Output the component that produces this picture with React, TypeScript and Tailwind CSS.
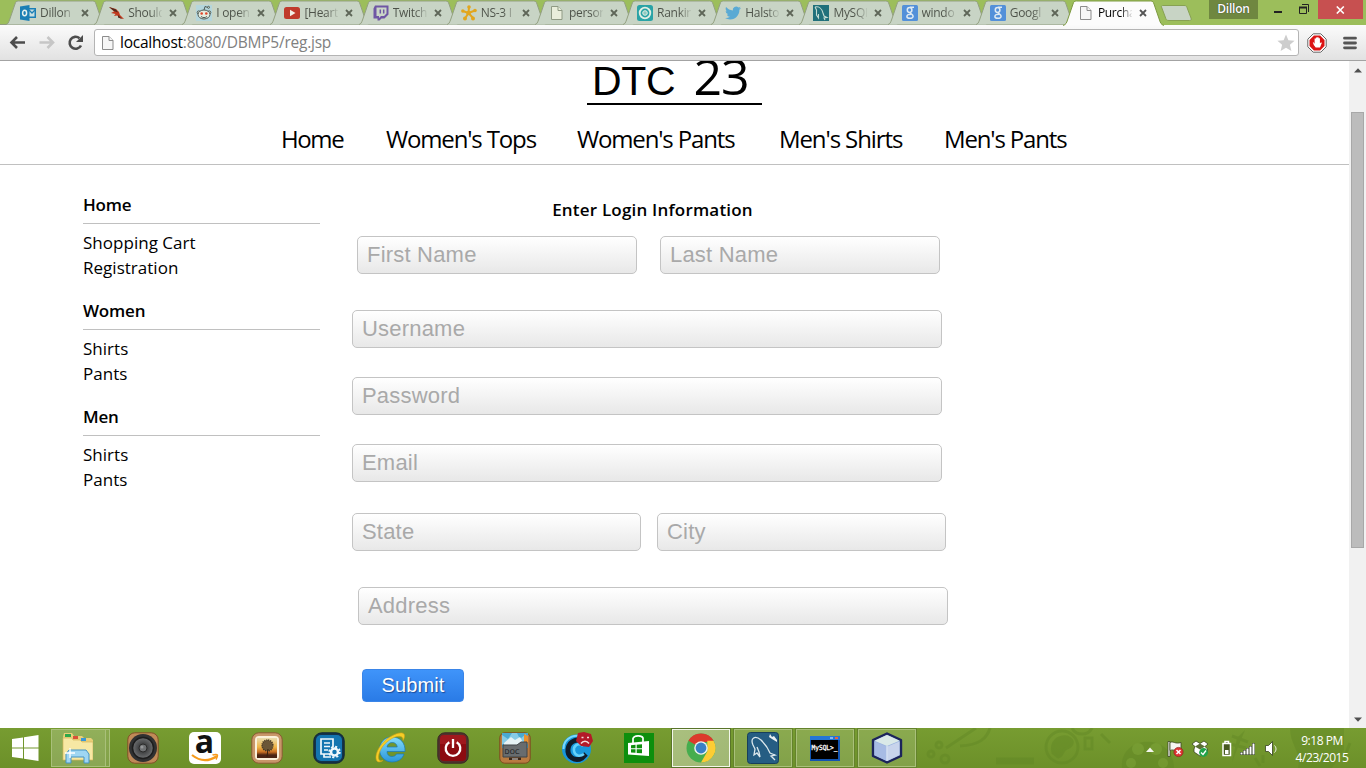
import React from 'react';

type Kids = { children?: React.ReactNode };

const Page = ({ active }: { active?: boolean }) => (
  <svg width="16" height="16" viewBox="0 0 16 16" fill={active ? '#f6f6f6' : '#e9eedb'} stroke={active ? '#8c8c8c' : '#8f9a84'}>
    <path d="M2.5 1.5h6.500l4 4v9h-10.500z" />
    <path d="M9 1.500v4h4" />
  </svg>
);

const GoogleG = () => (
  <svg width="16" height="16" viewBox="0 0 16 16">
    <rect width="16" height="16" rx="1.5" fill="#5390d9" />
    <g fill="none" stroke="#dfeaf2" strokeWidth="1.5">
      <ellipse cx="7.6" cy="5" rx="2.3" ry="2.4" />
      <path d="M8 2.300h4M8.500 7.500c-1 1 2.600 1.600 2.600 3.700c0 3-6.200 2.600-6.200.2c0-1.800 2-2.200 4.200-2.200" />
    </g>
  </svg>
);

const Outlook = () => (
  <svg width="16" height="16" viewBox="0 0 16 16">
    <path d="M8 3h8v10H8z" fill="#1b7fb5" />
    <path d="M9 4.500h5.500v7H9z" fill="#c9dfe0" />
    <path d="M9 5l3 3 3-3" fill="none" stroke="#1b7fb5" strokeWidth="1.300" />
    <path d="M0 1.500L9.500 0v16L0 14.500z" fill="#1b7fb5" />
    <ellipse cx="4.600" cy="8" rx="2" ry="2.700" fill="none" stroke="#e6f1ee" strokeWidth="1.500" />
  </svg>
);

const RedBird = () => (
  <svg width="16" height="16" viewBox="0 0 16 16">
    <path d="M1 2l7 2 3 3 1 3 4 4-3-.5-4-3-3 .5 1.500-2L3 8l3-1.500z" fill="#c0391d" />
    <path d="M1 2l7 2.500 2 3-4-1.500zM10 10l4 4-4-1.500z" fill="#4b2a20" />
  </svg>
);

const Reddit = () => (
  <svg width="16" height="16" viewBox="0 0 16 16">
    <rect width="16" height="16" fill="#b5d6dc" />
    <g fill="#e4ecdf" stroke="#4c5a55" strokeWidth="1">
      <circle cx="2.800" cy="7.500" r="1.600" />
      <circle cx="13.200" cy="7.500" r="1.600" />
      <path d="M8 5l1-3.500 3 1" fill="none" />
      <circle cx="12.500" cy="2.300" r="1" />
      <ellipse cx="8" cy="9.500" rx="6" ry="4.500" />
      <path d="M5 11.500c2 1.500 4 1.500 6 0" fill="none" />
    </g>
    <circle cx="5.700" cy="8.500" r="1.300" fill="#e0452a" />
    <circle cx="10.300" cy="8.500" r="1.300" fill="#e0452a" />
  </svg>
);

const YouTube = () => (
  <svg width="16" height="16" viewBox="0 0 16 16">
    <rect y="2" width="16" height="12" rx="2.500" fill="#c03a2b" />
    <path d="M6 4.800v6.400L11.500 8z" fill="#f3efe6" />
  </svg>
);

const Twitch = () => (
  <svg width="16" height="16" viewBox="0 0 16 16">
    <path d="M2 .5h13.500v9L11.500 13.500H8.500L6.500 15.500H4.500v-2H.5V3.500z" fill="#6f56a4" />
    <path d="M3.500 2.500h10v6l-2.500 2.500H8l-2 2v-2H3.500z" fill="#cbd6c8" />
    <path d="M7.300 4.500v4M10.700 4.500v4" stroke="#6f56a4" strokeWidth="1.500" />
  </svg>
);

const Ns3 = () => (
  <svg width="16" height="16" viewBox="0 0 16 16" fill="#e2a61e" stroke="#e2a61e" strokeWidth="2">
    <path d="M7.500 8L8 2M7.500 8L1.800 6M7.500 8L4 13.500M7.500 8l5 5.500M7.500 8L14 5.500" />
    <g stroke="none">
      <circle cx="8" cy="2" r="1.800" /><circle cx="1.800" cy="6" r="1.700" /><circle cx="4" cy="13.500" r="2" />
      <circle cx="12" cy="13.500" r="2" /><circle cx="14" cy="5.500" r="1.800" /><circle cx="7.500" cy="8" r="2.300" />
    </g>
  </svg>
);

const Ranking = () => (
  <svg width="16" height="16" viewBox="0 0 16 16">
    <rect width="16" height="16" rx="2.500" fill="#2aa3a6" />
    <circle cx="8" cy="8" r="5.300" fill="none" stroke="#e2efe4" strokeWidth="1.800" />
    <circle cx="8" cy="8" r="2.300" fill="#8dcac1" stroke="#e2efe4" />
  </svg>
);

const Twitter = () => (
  <svg width="16" height="16" viewBox="0 0 24 24" fill="#5aaad4">
    <path d="M23.950 4.570a10 10 0 01-2.820.780 4.960 4.960 0 002.160-2.720c-.950.560-2 .950-3.130 1.180a4.920 4.920 0 00-8.380 4.480C7.690 8.100 4.070 6.130 1.640 3.160a4.820 4.820 0 00-.660 2.480c0 1.710.870 3.210 2.190 4.100a4.900 4.900 0 01-2.230-.620v.060a4.920 4.920 0 003.950 4.830 5 5 0 01-2.210.080 4.940 4.940 0 004.600 3.420A9.870 9.870 0 010 19.540a14 14 0 007.550 2.210c9.050 0 14-7.500 14-13.980 0-.210 0-.420-.020-.630a9.940 9.940 0 002.460-2.550z" />
  </svg>
);

const MySqlFav = () => (
  <svg width="16" height="16" viewBox="0 0 16 16">
    <rect width="16" height="16" fill="#20707b" />
    <path d="M2 2c4-1 7 2 8 6l1 3 3 1.500-3 .5 1 2M2 2l1.500 3v5l2 3v-4" fill="none" stroke="#c4dcd4" strokeWidth="1.100" />
  </svg>
);

const tabs: { t: string; icon: React.ReactNode }[] = [
  { t: 'Dillon', icon: <Outlook /> },
  { t: 'Should', icon: <RedBird /> },
  { t: 'I open', icon: <Reddit /> },
  { t: '[Heart', icon: <YouTube /> },
  { t: 'Twitch', icon: <Twitch /> },
  { t: 'NS-3 I', icon: <Ns3 /> },
  { t: 'person', icon: <Page /> },
  { t: 'Rankin', icon: <Ranking /> },
  { t: 'Halsto', icon: <Twitter /> },
  { t: 'MySQL', icon: <MySqlFav /> },
  { t: 'windo', icon: <GoogleG /> },
  { t: 'Googl', icon: <GoogleG /> },
  { t: 'Purcha', icon: <Page active /> },
];

const Tab = ({ t, icon, active }: { t: string; icon: React.ReactNode; active?: boolean }) => (
  <div className={active ? 'relative z-10 flex h-[25px] w-[88.170px] shrink-0 items-center pl-[16px]' : 'relative flex h-[25px] w-[88.170px] shrink-0 items-center pl-[16px]'}>
    <svg className="absolute left-0 top-0" width="104" height="26" viewBox="0 0 104 26">
      <path
        d={active ? 'M1 25.500C4 24.500 4.500 23 5.500 20L11 4C11.700 1.800 12.300 1 14.500 1H88.500C90.700 1 91.300 1.800 92 4L97.500 20C98.500 23 99 24.500 102 25.500' : 'M2 24.500C4 24 4.500 22.500 5.500 20L11 4C11.700 1.800 12.300 1 14.500 1H88.500C90.700 1 91.300 1.800 92 4L97.500 20C98.500 22.500 99 24 101 24.500'}
        fill={active ? '#fcfcfc' : '#c8d4c5'}
        stroke={active ? '#7c9940' : '#93a081'}
        strokeWidth="1"
      />
    </svg>
    <span className="relative flex h-4 w-4">{icon}</span>
    <span
      className={active ? 'relative ml-[4px] w-[34px] overflow-hidden whitespace-nowrap bg-linear-to-r from-black from-65% to-black/10 bg-clip-text text-[12px] tracking-[-0.300px] text-transparent' : 'relative ml-[4px] w-[34px] overflow-hidden whitespace-nowrap bg-linear-to-r from-[#4c5148] from-65% to-[#4c5148]/10 bg-clip-text text-[12px] tracking-[-0.300px] text-transparent'}
    >
      {t}
    </span>
    <svg className="relative ml-[7px]" width="8" height="8" viewBox="0 0 8 8">
      <path d="M1 1l6 6M7 1L1 7" stroke={active ? '#555' : '#5e6658'} strokeWidth="1.800" />
    </svg>
  </div>
);

const Chrome = () => (
  <div className="h-[61px] shrink-0 bg-[#9cbe5b]">
    <div className="flex h-[25px]">
      <div className="flex w-[1159px] shrink-0 pl-[4px] shadow-[inset_0_-1px_0_#8f9b7c]">
        {tabs.map((x, i) => <Tab key={i} t={x.t} icon={x.icon} active={i === 12} />)}
      </div>
      <svg className="mt-[5px] shrink-0" width="34" height="16" viewBox="0 0 34 16">
        <path d="M2.500 2C2 .8 3 .5 4 .5H25c2 0 2.500.5 3 2l4 10.500c.8 2-.2 2.500-1.500 2.500H10c-2 0-2.600-.5-3.200-2z" fill="#c8d4c5" stroke="#87a153" />
      </svg>
      <div className="ml-[16px] flex h-[19px] w-[49px] shrink-0 items-center justify-center bg-[#6f8740] pb-px text-[12px] font-semibold tracking-[-0.200px] text-white [text-shadow:0_0_1px_#222]">Dillon</div>
      <svg className="ml-[16px] mt-[4px] shrink-0" width="38" height="12" viewBox="0 0 38 12" fill="none" stroke="#222">
        <path d="M0 8h8" strokeWidth="2" />
        <path d="M25.500 3.500h7v6h-7z" />
        <path d="M25 3.500h8" strokeWidth="2" />
        <path d="M28 .5h6.500V8" />
      </svg>
      <div className="ml-[6px] flex h-[19px] w-[45px] shrink-0 items-center justify-center bg-[#c75050]">
        <svg width="9" height="8" viewBox="0 0 9 8"><path d="M.8.500l7 7M7.800.500l-7 7" stroke="#fff" strokeWidth="1.600" /></svg>
      </div>
    </div>
    <div className="flex h-[36px] items-center border-b border-[#a3a3a3] bg-linear-to-b from-[#fbfbfb] to-[#e2e2e2] pl-[9px]">
      <svg width="80" height="18" viewBox="0 0 80 18" fill="none" strokeWidth="2.600">
        <path d="M2 8.500H16M8 3L2.500 8.500 8 14" stroke="#4d4d4d" />
        <path d="M30.500 8.500H44M38.500 3l5.500 5.500-5.500 5.500" stroke="#c6c6c6" />
        <path d="M72 11.500A6 6 0 1 1 70.500 4.200" stroke="#4d4d4d" />
        <path d="M74 1v7h-7z" fill="#4d4d4d" />
      </svg>
      <div className="ml-[5px] flex h-[27px] w-[1205px] shrink-0 items-center rounded-[3px] border border-[#b4b4b4] bg-white pl-[5px]">
        <Page active />
        <span className="ml-[4px] whitespace-nowrap text-[15.500px] tracking-[-0.230px] text-[#808080]"><span className="text-black">localhost</span>:8080/DBMP5/reg.jsp</span>
        <svg className="ml-auto mr-[3px]" width="18" height="18" viewBox="0 0 18 18"><path d="M9 .5l2.400 5.800 6.200.5-4.700 4 1.500 6.200L9 13.700 3.600 17l1.500-6.200-4.700-4 6.200-.5z" fill="#cdcdcd" /></svg>
      </div>
      <svg className="ml-[8px]" width="20" height="20" viewBox="0 0 20 20">
        <path d="M6.200.8h7.600l5.400 5.400v7.600l-5.400 5.400H6.200L.8 13.800V6.200z" fill="#fff" stroke="#666" />
        <path d="M6.900 2.500h6.200l4.400 4.400v6.200l-4.400 4.400H6.900l-4.400-4.400V6.900z" fill="#dc1414" />
        <path d="M5.800 9.300l1 .2.800 1.200V5.500h1.300V4.500h1.400v-.3h1.300v1h1.300v5l1.300-1 .6.8-1.800 4.500H8.700L6.800 12z" fill="#fff" />
      </svg>
      <svg className="ml-[16px]" width="14" height="14" viewBox="0 0 14 14"><path d="M1.500 2.200h11M1.500 7h11M1.500 11.800h11" stroke="#555" strokeWidth="2.800" strokeLinecap="round" /></svg>
    </div>
  </div>
);

const Field = ({ w, children }: Kids & { w: string }) => (
  <div className={`${w} flex h-[38px] shrink-0 items-center rounded-[5px] border border-[#c4c4c4] bg-linear-to-b from-white to-[#e8e8e8] pb-px pl-[9px] font-['Liberation_Sans',sans-serif] text-[22px] tracking-[0.200px] text-[#a9a9a9]`}>
    {children}
  </div>
);

const Group = ({ title, items }: { title: string; items: string[] }) => (
  <section className="h-[106px] w-[237px]">
    <h3 className="flex h-[32px] items-start border-b border-[#c0c0c0] text-[17px] font-semibold leading-[26px] tracking-[-0.200px]">{title}</h3>
    <ul className="pt-[6px] text-[17px] leading-[25px] tracking-[0.020px]">{items.map((i) => <li key={i}>{i}</li>)}</ul>
  </section>
);

const Site = () => (
  <div className="min-w-0 flex-1 overflow-hidden bg-white text-black">
    <header className="h-[104px] border-b border-[#c0c0c0]">
      <div className="ml-[587px] flex h-[44px] w-[175px] items-end border-b-2 border-black pl-[5px]">
        <span className="font-['Liberation_Sans',sans-serif] text-[41px] leading-[43px] tracking-[-0.300px]">DTC</span>
        <span className="ml-[18px] text-[50px] font-medium leading-[54px] tracking-[-1px]">23</span>
      </div>
      <nav className="flex pl-[281px] pt-[16px] text-[24px] leading-[36px]">
        <span className="w-[105px] shrink-0 tracking-[-1.400px]">Home</span>
        <span className="w-[191px] shrink-0 tracking-[-1.150px]">Women's Tops</span>
        <span className="w-[202px] shrink-0 tracking-[-1.150px]">Women's Pants</span>
        <span className="w-[165px] shrink-0 tracking-[-1.100px]">Men's Shirts</span>
        <span className="tracking-[-1.150px]">Men's Pants</span>
      </nav>
    </header>
    <div className="flex">
      <aside className="w-[352px] shrink-0 pl-[83px] pt-[27px]">
        <Group title="Home" items={['Shopping Cart', 'Registration']} />
        <Group title="Women" items={['Shirts', 'Pants']} />
        <Group title="Men" items={['Shirts', 'Pants']} />
      </aside>
      <form className="flex w-[600px] flex-col">
        <h2 className="mt-[32px] w-[601px] text-center text-[17px] font-semibold leading-[26px] tracking-[0.200px]">Enter Login Information</h2>
        <div className="ml-[5px] mt-[13px] flex gap-[23px]"><Field w="w-[280px]">First Name</Field><Field w="w-[280px]">Last Name</Field></div>
        <div className="mt-[36px] flex flex-col gap-[29px]">
          <Field w="w-[590px]">Username</Field>
          <Field w="w-[590px]">Password</Field>
          <Field w="w-[590px]">Email</Field>
        </div>
        <div className="mt-[31px] flex gap-[16px]"><Field w="w-[289px]">State</Field><Field w="w-[289px]">City</Field></div>
        <div className="ml-[6px] mt-[36px] flex"><Field w="w-[590px]">Address</Field></div>
        <button type="button" className="ml-[10px] mt-[44px] h-[33px] w-[102px] rounded-[4px] border border-[#3a85e8] bg-linear-to-b from-[#3f94fa] to-[#2a7be6] pb-[2px] font-['Liberation_Sans',sans-serif] text-[20px] leading-[28px] tracking-[0.100px] text-white [text-shadow:1px_1px_1px_#1c4c98]">Submit</button>
      </form>
    </div>
  </div>
);

const Scrollbar = () => (
  <div className="flex w-[17px] shrink-0 flex-col items-center bg-[#f1f1f1]">
    <svg className="mt-[7px] shrink-0" width="8" height="5" viewBox="0 0 8 5"><path d="M0 4.500L4 .3l4 4.200z" fill="#505050" /></svg>
    <div className="mt-[39px] h-[436px] w-[13px] shrink-0 border border-[#a8a8a8] bg-[#bcbcbc]" />
    <svg className="mb-[6px] mt-auto shrink-0" width="8" height="5" viewBox="0 0 8 5"><path d="M0 .5l4 4.200L8 .5z" fill="#505050" /></svg>
  </div>
);

const Big = ({ children }: Kids) => <svg width="32" height="32" viewBox="0 0 32 32">{children}</svg>;

const Explorer = () => (
  <svg className="-ml-[3px]" width="32" height="32" viewBox="0 0 32 32">
    <path d="M2 5l1-4h8l2 3h8l2 2h7l2 2v20H2z" fill="#e9cf78" />
    <path d="M4 2h6v3H4z" fill="#2ea84a" /><path d="M12 4h5v3h-5z" fill="#d95038" /><path d="M20 6h5v3h-5z" fill="#3a97d6" />
    <path d="M2 6h9l1 2h7l2 2h11v18H2z" fill="#f7e8a4" stroke="#d4b65c" strokeWidth=".7" />
    <path d="M5 31v-9l3-4h17l3 4v9h-5v-6H10v6z" fill="#9fd6f2" stroke="#4593c2" />
    <path d="M9 16v10M4 21h10" stroke="#fff" strokeWidth="1.300" />
  </svg>
);

const Speaker = () => (
  <Big>
    <defs><radialGradient id="cone"><stop offset=".3" stopColor="#3a3b3c" /><stop offset="1" stopColor="#6d6f71" /></radialGradient></defs>
    <rect x=".8" y=".8" width="30.400" height="30.400" rx="7" fill="#c08a58" stroke="#805027" />
    <circle cx="16" cy="16" r="14" fill="#303132" />
    <circle cx="16" cy="16" r="10.500" fill="url(#cone)" stroke="#1d1d1d" strokeWidth="1.500" />
    <circle cx="16" cy="16" r="4" fill="#707274" stroke="#2b2b2b" />
    <circle cx="15" cy="15" r="1.500" fill="#96989a" />
  </Big>
);

const Amazon = () => (
  <Big>
    <rect width="32" height="32" rx="5" fill="#fff" />
    <text x="15.500" y="21" textAnchor="middle" fontFamily="Open Sans" fontWeight="700" fontSize="32" fill="#111">a</text>
    <path d="M3 23c8 6.500 17 6.500 25 1" fill="none" stroke="#f79b1c" strokeWidth="2.200" />
    <path d="M23.500 23c3-1 5-.5 5 0s-.3 2.500-1.500 4.500" fill="none" stroke="#f79b1c" strokeWidth="1.500" />
  </Big>
);

const Photo = () => (
  <Big>
    <defs><linearGradient id="sky" x2="0" y2="1"><stop stopColor="#e9dcae" /><stop offset=".45" stopColor="#efb548" /><stop offset=".7" stopColor="#c96f22" /><stop offset=".85" stopColor="#4a2413" /></linearGradient></defs>
    <rect x=".8" y=".8" width="30.400" height="30.400" rx="7" fill="#c8966a" stroke="#875a31" />
    <rect x="4" y="4" width="24" height="24" rx="4" fill="#fbf0d9" />
    <rect x="6" y="6" width="20" height="20" fill="url(#sky)" />
    <circle cx="16.500" cy="13.500" r="5.500" fill="#6b5637" stroke="#423524" strokeDasharray="1 1" strokeWidth="1.500" />
    <path d="M17 17l-1 8" stroke="#35200f" />
  </Big>
);

const Settings = () => (
  <Big>
    <rect x=".8" y=".8" width="30.400" height="30.400" rx="8" fill="#15334a" stroke="#102536" />
    <rect x="3" y="3" width="26" height="26" rx="5" fill="#1475b0" />
    <g fill="none" stroke="#f1f8fc" strokeWidth="1.700">
      <path d="M17 22H8V7h12v8M11 22v3h7" />
      <path d="M11 11h6M11 14.500h6M11 18h4" strokeWidth="1.300" />
      <circle cx="21.500" cy="20" r="3.500" strokeWidth="2.500" />
      <circle cx="21.500" cy="20" r="5.300" strokeDasharray="2.100 2.060" strokeWidth="1.800" />
    </g>
  </Big>
);

const IE = () => (
  <Big>
    <defs><linearGradient id="ie" x2="0" y2="1"><stop stopColor="#83dcfa" /><stop offset="1" stopColor="#2a96da" /></linearGradient></defs>
    <path d="M17 5C9 5 4.500 11 4.500 17.500S9.500 30 17 30c6 0 10.500-3 12-8h-7.500c-1 1.800-2.500 2.500-4.500 2.500-3 0-5-2-5-5H30C30.500 10.500 25 5 17 5zm-5 10c.5-2.800 2.500-4.500 5.200-4.500s4.800 1.700 5 4.500z" fill="url(#ie)" stroke="#1879b8" strokeWidth=".7" />
    <path d="M8 28.500C1 33-1 26 3 18 9 5 26-2 29 2c1 1.500.5 4-1 6.500C29-.5 11 6 5 19c-3 7-1.500 11 3 9.500z" fill="#f6ce27" stroke="#d7a313" strokeWidth=".6" />
  </Big>
);

const Power = () => (
  <Big>
    <rect x=".8" y=".8" width="30.400" height="30.400" rx="7" fill="#53302d" stroke="#3a2c24" />
    <rect x="3" y="3" width="26" height="26" rx="4" fill="#8c0b10" />
    <path d="M3 12V7a4 4 0 0 1 4-4h18a4 4 0 0 1 4 4v5z" fill="#b3252a" opacity=".5" />
    <path d="M12.300 10.200a7.300 7.300 0 1 0 7.400 0M16 7v9" fill="none" stroke="#fff" strokeWidth="2.300" />
  </Big>
);

const Doc = () => (
  <Big>
    <rect x=".8" y=".8" width="30.400" height="30.400" rx="5" fill="#b97b40" stroke="#7c4c20" />
    <path d="M3 1h26v15H3z" fill="#4aa9d2" />
    <path d="M3 3l6 4 4-6h5l3 6 6-5v10H3z" fill="#86cbe6" />
    <path d="M5 11l7-6 4 3 5-3 4 7v2H5z" fill="#e6f2f4" /><path d="M25 2l4 2v8l-4-2z" fill="#ea9230" />
    <path d="M4 13h14l4-3h6v15H4z" fill="#686c6e" stroke="#404446" />
    <text x="5.500" y="22" fontFamily="DejaVu Sans" fontSize="6.500" textLength="15" fill="#1b1d1f">DOC</text>
    <path d="M10 25.500h12v2.500H10z" fill="#3b281a" /><path d="M13 27h6" stroke="#ddd" />
  </Big>
);

const Comodo = () => (
  <Big>
    <circle cx="15.500" cy="17" r="14.500" fill="#1897dc" />
    <path d="M2.500 17a13 13 0 0 1 22-9.500" fill="none" stroke="#7ad8fb" strokeWidth="2" />
    <path d="M24 11C17 5 8 9 7 17s7 13 14 9l4-4" fill="none" stroke="#101c2a" strokeWidth="5" />
    <path d="M22 14c-5-4-10 0-9 5s6 6 10 3" fill="none" stroke="#65d1fa" strokeWidth="2.500" />
    <path d="M17 1l6-1 7 2 2 7-4 6-8-1-5-5z" fill="#b41928" />
    <path d="M20 11.500c2-3 6-3 8 0M20.500 5.500h2M26 5.500h2" fill="none" stroke="#f2dcdc" strokeWidth="1.500" />
  </Big>
);

const Store = () => (
  <Big>
    <path d="M1 1h30v30H1z" fill="#0d8f0d" />
    <path d="M5 11l21-2v15l-21-1.500z" fill="#fff" />
    <path d="M10 11V6.500C11 3 19 3 20 6v5" fill="none" stroke="#fff" strokeWidth="1.700" />
    <path d="M8 13.200l4.500-.4v3.500H8zM13.700 12.700l5.300-.4v4h-5.300zM8 17.300h4.500v3.500L8 20.500zM13.700 17.300H19v4l-5.300-.4z" fill="#0d8f0d" />
  </Big>
);

const ChromeIcon = () => (
  <Big>
    <circle cx="16" cy="16" r="14.500" fill="#46ad4e" />
    <path d="M16 16L3.440 8.750A14.500 14.500 0 0 1 28.560 8.750L28 10H16z" fill="#dc3a2c" />
    <path d="M28.560 8.750A14.500 14.500 0 0 1 16 30.500l6.300-11V8.750z" fill="#fccd34" />
    <circle cx="16" cy="16" r="6.800" fill="#edf2ec" /><circle cx="16" cy="16" r="5.400" fill="#3980c5" />
  </Big>
);

const Workbench = () => (
  <Big>
    <rect x=".5" y=".5" width="31" height="31" rx="3" fill="#255d83" stroke="#173f5b" />
    <path d="M6 13C3 6 8 3 14 8c5 5 7 8 9 13l5 2-4 1 4 4M6 13l2 4-1 6 3-2 3 4-1-5-2-5" fill="none" stroke="#dce8ed" strokeWidth="1.300" />
    <path d="M23 2l2 3 2-1 3 4v2l-5-3-3-2z" fill="#eef2f2" />
  </Big>
);

const Terminal = () => (
  <Big>
    <path d="M1 4h30v25H1z" fill="#1254b0" /><path d="M1 4h30v4H1z" fill="#2576d4" /><path d="M2 8h27v19H2z" fill="#000" />
    <path d="M21 5h3v2h-3z" fill="#86b7ee" /><path d="M26 5h3v2h-3z" fill="#ea633d" />
    <text x="2.500" y="17.500" fontFamily="DejaVu Sans Mono" fontSize="7" textLength="26" lengthAdjust="spacingAndGlyphs" fill="#fff" stroke="#fff" strokeWidth=".3">MySQL&gt;_</text>
  </Big>
);

const Cube = () => (
  <Big>
    <path d="M16 1.500L30 8v16l-14 6.500L2 24V8z" fill="#9ab3df" stroke="#1c245b" strokeWidth="2.400" strokeLinejoin="round" />
    <path d="M3.500 8.800L16 3l12.500 5.800L16 14z" fill="#dae9e8" /><path d="M3.500 9.500L15.500 14.500v14.300L3.500 23z" fill="#a7bbe4" /><path d="M16.500 14.500l12-5V23l-12 5.800z" fill="#c8d4ec" />
    <path d="M16 14v15" stroke="#f1f6fb" />
  </Big>
);

const Cell = ({ children, open, on }: Kids & { open?: boolean; on?: boolean }) => (
  <div className="flex h-[40px] w-[62px] shrink-0 items-center justify-center">
    <div className={on ? 'flex h-[38px] w-[58px] items-center justify-center border border-[#f3f7ea] bg-linear-to-br from-[#aac07f] to-[#a0b773] outline outline-[#59742a]' : open ? 'flex h-[38px] w-[58px] items-center justify-center border border-[#a9c07a] bg-white/15 outline outline-[#64832c]' : 'flex h-[38px] w-[58px] items-center justify-center'}>
      {children}
    </div>
  </div>
);

const Taskbar = () => (
  <footer className="relative flex h-[40px] shrink-0 bg-linear-to-b from-[#779c31] to-[#6c9029]">
    <svg className="absolute right-0 top-0" width="566" height="40" viewBox="0 0 566 40" fill="none" stroke="#5f8524" strokeWidth="3" opacity=".4">
      <circle cx="262" cy="19" r="16" /><path d="M253 25c-3-12 6-17 14-16 8 3 6 9 0 11s-3 8-9 9z" fill="#5f8524" />
      <path d="M272 0c4 8 16 8 20 0M301 6l9 9M285 10h7v11h-7z" /><path d="M196 33h38" strokeWidth="7" />
      <path d="M322 40c-3-34 52-36 52 0zM347 0v8" fill="#5f8524" stroke="none" />
      <g fill="#7da43a" stroke="none"><circle cx="338" cy="21" r="6" /><circle cx="356" cy="21" r="6" /><circle cx="331" cy="35" r="5" /><circle cx="363" cy="35" r="5" /></g>
      <path d="M432 34l5-24 8-8M490 0h54v22l-12 18h-34c4-16-8-22-8-40z" fill="#5f8524" stroke="none" /><path d="M432 8l16 6M430 16l16 4M550 15l-7 18M455 30l5 8M463 27v8" />
      <circle cx="131" cy="26" r="3" /><circle cx="139" cy="17" r="3" /><circle cx="145" cy="31" r="4" /><path d="M146 20l30-20M160 18c20-1 27-8 30-18" />
    </svg>
    <div className="relative flex w-[50px] shrink-0 items-center pl-[12px]">
      <svg width="27" height="26" viewBox="0 0 27 26" fill="#fff"><path d="M0 4l11-1.500v10H0zM12 2.300L26.500 0v12.500H12zM0 13.500h11v10L0 22zM12 13.500h14.500V26L12 23.700z" /></svg>
    </div>
    <div className="relative flex w-[62px] shrink-0 items-center pl-[1px]">
      <div className="flex h-[38px] w-[55px] items-center justify-center border border-[#a9c07a] bg-white/20"><Explorer /></div>
      <div className="h-[38px] w-[4px] border border-l-0 border-[#a9c07a] bg-white/15" />
    </div>
    <div className="relative flex">
      <Cell><Speaker /></Cell><Cell><Amazon /></Cell><Cell><Photo /></Cell><Cell><Settings /></Cell><Cell><IE /></Cell><Cell><Power /></Cell><Cell><Doc /></Cell><Cell><Comodo /></Cell><Cell><Store /></Cell>
      <Cell open on><ChromeIcon /></Cell><Cell open><Workbench /></Cell><Cell open><Terminal /></Cell><Cell open><Cube /></Cell>
    </div>
    <div className="relative ml-auto flex shrink-0 items-center pr-[16px] pt-px">
      <svg width="132" height="20" viewBox="0 0 132 20">
        <path d="M1 13l4-4.500L9 13z" fill="#f4f6ee" />
        <g stroke="#39451f" strokeWidth=".8">
          <path d="M23 2.500h2v15h-2z" fill="#fff" /><path d="M25 3.500c3-2 5 2 11 0v8c-5 2-7-2-11 0z" fill="#f6f6f2" />
          <path d="M47 5l4-3 4 2.500L59 2l4 3-3 2.500 2.500 2.500V14L55 17l-6-4v-3l1-2.500z" fill="#fff" />
        </g>
        <path d="M50 7.500l5-3 5 3-5 3zM49 12l6-2" fill="#5b6f35" />
        <circle cx="33.500" cy="13" r="4.600" fill="#df3434" stroke="#8f231d" strokeWidth=".7" /><path d="M31.500 11l4 4M35.500 11l-4 4" stroke="#fff" strokeWidth="1.500" />
        <circle cx="58.500" cy="13.500" r="4.400" fill="#21a349" /><path d="M56 13.500l2 2 3-4" fill="none" stroke="#fff" strokeWidth="1.300" />
        <path d="M78 4.500h7.500v12H78zM80 2.500h3.500v2H80z" fill="#46591f" stroke="#fff" strokeWidth="1.500" /><path d="M80 11h3.500v4H80z" fill="#fff" />
        <path d="M96.500 16v-3M99.500 16v-5M102.500 16v-7M105.500 16V7M108.500 16V4" stroke="#2b391a" strokeWidth="3" />
        <path d="M96.500 15.500v-2M99.500 15.500v-4M102.500 15.500v-6M105.500 15.500v-8M108.500 15.500v-11" stroke="#fff" strokeWidth="2" />
        <path d="M120.500 6.500h3l4-4v14l-4-4h-3z" fill="#fff" stroke="#35411f" strokeWidth=".8" /><path d="M129.500 6.500c2 2 2 5 0 7" fill="none" stroke="#f2f5ec" />
      </svg>
      <div className="ml-[17px] w-[56px] whitespace-nowrap text-center text-[12px] leading-[17px] tracking-[-0.450px] text-white"><div>9:18 PM</div><div>4/23/2015</div></div>
    </div>
  </footer>
);

export default function App() {
  return (
    <div className="flex h-[768px] w-[1366px] flex-col overflow-hidden font-['Open_Sans',sans-serif]">
      <Chrome />
      <main className="flex min-h-0 flex-1"><Site /><Scrollbar /></main>
      <Taskbar />
    </div>
  );
}
